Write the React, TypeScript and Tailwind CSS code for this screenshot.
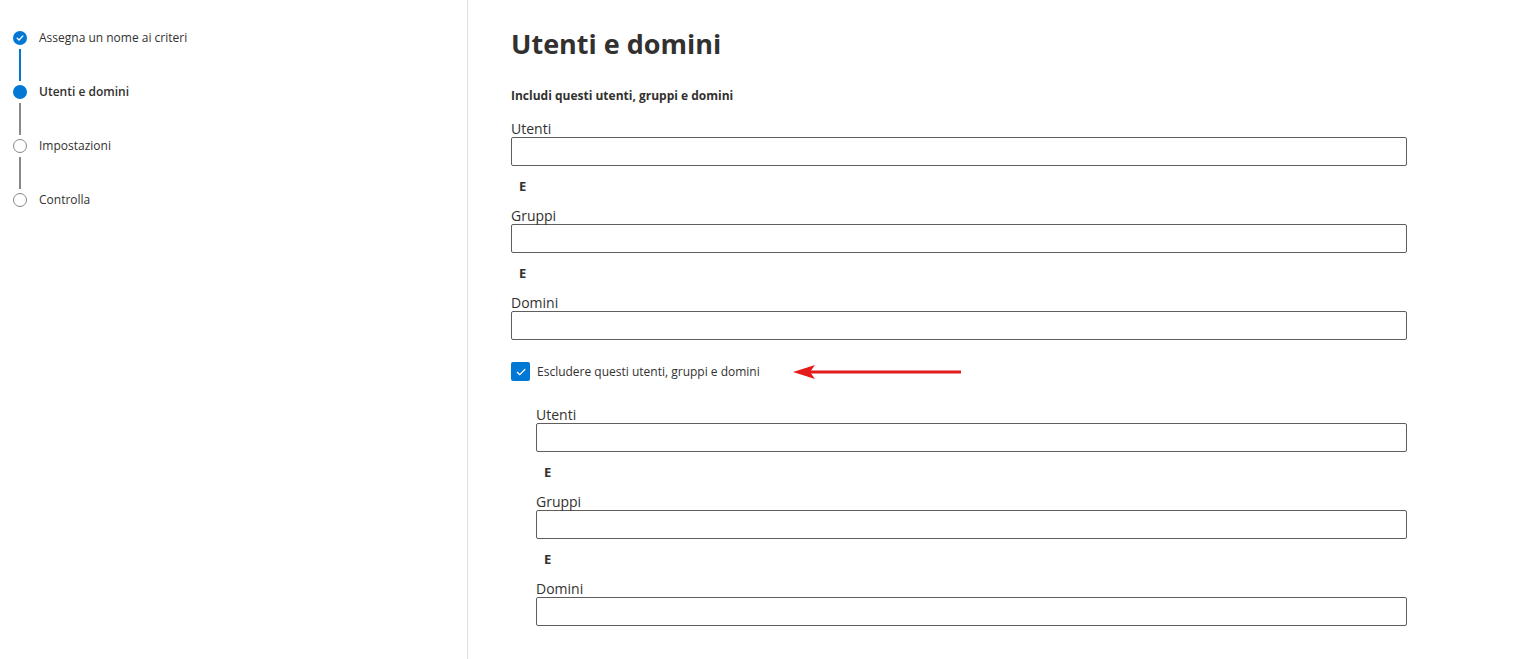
import React from "react";

type Step = { label: string; state: "done" | "current" | "todo" };

const steps: Step[] = [
  { label: "Assegna un nome ai criteri", state: "done" },
  { label: "Utenti e domini", state: "current" },
  { label: "Impostazioni", state: "todo" },
  { label: "Controlla", state: "todo" },
];

const StepDot = ({ state }: { state: Step["state"] }) => {
  if (state === "done") {
    return (
      <div className="flex h-[14px] w-[14px] items-center justify-center rounded-full bg-[#0078d4]">
        <svg width="8" height="8" viewBox="0 0 8 8" fill="none">
          <path d="M1.2 4.2 L3.1 6 L6.8 2" stroke="white" strokeWidth="1.3" strokeLinecap="round" strokeLinejoin="round" />
        </svg>
      </div>
    );
  }
  if (state === "current") {
    return <div className="h-[14px] w-[14px] rounded-full bg-[#0078d4]" />;
  }
  return <div className="h-[14px] w-[14px] rounded-full border-[1.5px] border-[#8a8886] bg-white" />;
};

const Field = ({ label }: { label: string }) => (
  <div>
    <div className="text-[14px] leading-[17px] text-[#323130]">{label}</div>
    <div className="h-[29px] w-full rounded-[2px] border border-[#605e5c] bg-white" />
  </div>
);

const AndSep = () => (
  <div className="pl-[8px] pt-[12px] pb-[12px] text-[13px] font-bold leading-[17px] text-[#323130]">E</div>
);

const FieldGroup = () => (
  <div>
    <Field label="Utenti" />
    <AndSep />
    <Field label="Gruppi" />
    <AndSep />
    <Field label="Domini" />
  </div>
);

export default function App() {
  return (
    <div className="flex h-[659px] w-full bg-white font-['Open_Sans','Noto_Sans',sans-serif] text-[#323130]">
      <aside className="w-[468px] shrink-0 border-r border-[#e1dfdd] pl-[13px] pt-[31px]">
        {steps.map((s, i) => (
          <div key={s.label} className="flex">
            <div className="flex w-[14px] flex-col items-center">
              <StepDot state={s.state} />
              {i < steps.length - 1 && (
                <div
                  className={
                    s.state === "done"
                      ? "my-[4px] h-[32px] w-[2px] bg-[#0078d4]"
                      : "my-[4px] h-[32px] w-[2px] bg-[#8a8886]"
                  }
                />
              )}
            </div>
            <div
              className={
                s.state === "current"
                  ? "-mt-[1px] pl-[12px] text-[12px] font-semibold leading-[16px]"
                  : "-mt-[1px] pl-[12px] text-[12px] leading-[16px]"
              }
            >
              {s.label}
            </div>
          </div>
        ))}
      </aside>

      <main className="flex-1 pl-[43px] pr-[131px] pt-[26px]">
        <h1 className="text-[27px] font-bold leading-[36px] text-[#323130]">Utenti e domini</h1>
        <div className="mt-[25px] text-[12px] font-bold leading-[18px]">Includi questi utenti, gruppi e domini</div>
        <div className="mt-[15px]">
          <FieldGroup />
        </div>

        <div className="relative mt-[22px] flex items-center">
          <div className="flex h-[19px] w-[19px] items-center justify-center rounded-[2px] bg-[#0078d4]">
            <svg width="12" height="12" viewBox="0 0 12 12" fill="none">
              <path d="M2.3 6.3 L4.8 8.7 L9.8 3.5" stroke="white" strokeWidth="1.2" strokeLinecap="round" strokeLinejoin="round" />
            </svg>
          </div>
          <span className="pl-[7px] text-[12px] leading-[18px]">Escludere questi utenti, gruppi e domini</span>
          <svg className="absolute left-[282px] top-[2px]" width="170" height="16" viewBox="0 0 170 16">
            <line x1="14" y1="8" x2="168" y2="8" stroke="#e31b1b" strokeWidth="3" />
            <polygon points="0,8 22,1 17,8 22,15" fill="#e31b1b" />
          </svg>
        </div>

        <div className="mt-[25px] pl-[25px]">
          <FieldGroup />
        </div>
      </main>
    </div>
  );
}
